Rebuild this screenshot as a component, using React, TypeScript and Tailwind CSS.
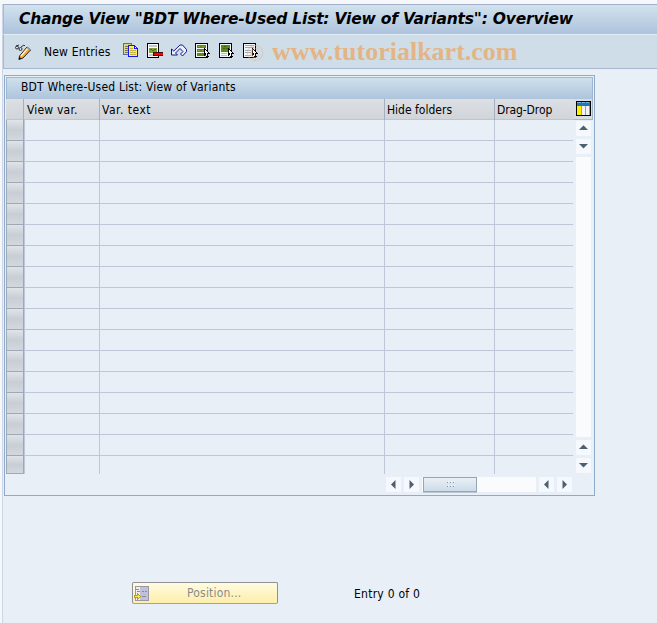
import React from 'react';

const TAHOMA = "font-['DejaVu_Sans_Condensed','DejaVu_Sans',sans-serif] [font-stretch:condensed]";

const ROWS = Array.from({ length: 17 }, (_, i) => i);

// 16x16 pixel icons of the application toolbar
const icon = 'block h-4 w-4 shrink-0';

const DisplayChangeIcon = () => (
  <svg className={icon} viewBox="0 0 16 16">
    <path d="M.5 3.500a1.500 1.500 0 1 0 3 0a1.500 1.500 0 1 0-3 0M4 5a1.500 1.500 0 1 0 3 0a1.500 1.500 0 1 0-3 0M1 2l3-1M6 3l3-2l1 1" fill="none" stroke="#222" strokeWidth=".9" />
    <path d="M4.500 12L12 3l3.500 3L8 14l-4 1.500z" fill="#f7a93a" stroke="#111" strokeWidth=".9" />
    <path d="M6 12l6.500-7.500" stroke="#fff0c8" strokeWidth="1.500" />
    <path d="M12.200 3.200l3 2.600" stroke="#8794c8" strokeWidth="1.600" />
    <path d="M3.500 15.500l1-2.500 2 1.600z" fill="#111" />
  </svg>
);

const CopyIcon = () => (
  <svg className={icon} viewBox="0 -1 16 16" shapeRendering="crispEdges">
    <path d="M0 0h9v12H0z" fill="#5b6aa8" />
    <path d="M1 1h7v10H1z" fill="#d8d888" />
    <path d="M2 3.500h3M2 5.500h3M2 7.500h3M2 9.500h3" stroke="#77774c" />
    <path d="M5 2h7v1h1v1h1v1h1v9H5z" fill="#1418e8" />
    <path d="M6 3h5v3h3v7H6z" fill="#fff05a" />
    <path d="M12 4h1v1h-1z" fill="#fff" />
    <path d="M7 5.500h3M7 7.500h6M7 9.500h6M7 11.500h6" stroke="#c4b040" />
  </svg>
);

const DeleteIcon = () => (
  <svg className={icon} viewBox="0 0 16 16" shapeRendering="crispEdges">
    <path d="M0 1h12v15H0z" fill="#000" />
    <path d="M1 2h10v13H1z" fill="#fff" />
    <path d="M2 3.500h8M2 4.500h8M2 12.500h6M2 13.500h6" stroke="#c3c8ce" />
    <path d="M2 6h8v5H2z" fill="#7fa03c" />
    <path d="M3 7.500h2M7 7.500h2M5 8.500h2" stroke="#4d7410" />
    <path d="M6 10h10v4H6z" fill="#3a0d10" />
    <path d="M7 11h9v2H7z" fill="#f00" />
  </svg>
);

const UndoIcon = () => (
  <svg className={icon} viewBox="0 -.5 16 16">
    <path d="M.5 6.500v6h6l-2-2L9 6l3 3-2.500 2.500 2 2L15.500 9.200V7L11.500 2.500H9L2.800 8.500z" fill="#eaf0f8" stroke="#15158e" strokeWidth="1" />
  </svg>
);

const SelectIcon = ({ kind }: { kind: 'all' | 'block' | 'none' }) => (
  <svg className={icon} viewBox="0 0 16 16" shapeRendering="crispEdges">
    <path d="M0 1h13v15H0z" fill="#000" />
    <path d="M1 2h11v13H1z" fill="#f4f6f8" />
    {kind === 'all' && (
      <>
        <path d="M2 3h9v3H2zM2 7h9v3H2zM2 11h9v3H2z" fill="#5d8a16" />
        <path d="M3 4.500h2M7 4.500h2M3 8.500h2M7 8.500h1" stroke="#86ad45" />
      </>
    )}
    {kind === 'block' && (
      <>
        <path d="M2 3h9v7H2z" fill="#5d8a16" />
        <path d="M5 4.500h2M4 6.500h2M7 6.500h2" stroke="#3f6508" />
        <path d="M2 11.500h6M2 13.500h6" stroke="#b4bdcc" />
      </>
    )}
    {kind === 'none' && <path d="M2 3.500h9M2 5.500h9M2 8.500h6M2 10.500h6M2 13.500h6" stroke="#9aabbd" />}
    <path d="M9 6h1v1h1v1h1v1h1v1h1v1h1v1h-2v2h1v1h-3v-2h-1v1H9z" fill="#000" />
    <path d="M10 8h1v1h1v1h1v1h-1v3h-1v-3h-1z" fill="#fff" />
  </svg>
);

const TableSettingsIcon = () => (
  <svg className="block h-[15px] w-[15px]" viewBox="0 0 15 15" shapeRendering="crispEdges">
    <path d="M0 0h15v15H0z" fill="#000" />
    <path d="M1 1h13v13H1z" fill="#f0f3f8" />
    <path d="M1 5h4v9H1z" fill="#fff000" />
    <path d="M1 1h13v4H1z" fill="#2276bd" />
    <path d="M1 1h4v1H1zM6 1h3v1H6zM10 1h3v1h-3z" fill="#79b5de" />
    <path d="M5.500 5v9M9.500 5v9M13.500 5v9" stroke="#9a9eab" />
  </svg>
);

const PositionIcon = () => (
  <svg className="block h-[15px] w-[15px]" viewBox="0 0 15 15" shapeRendering="crispEdges">
    <path d="M1 0h14v15H1z" fill="#9898a8" />
    <path d="M2 1h12v13H2z" fill="#c0c0d8" />
    <path d="M2 1h4v13H2z" fill="#eeeef2" />
    <path d="M2 3.500h3M3 5.500h3M8 5.500h2M11 5.500h2M8 10.500h4" stroke="#8c8c98" />
    <path d="M0 9h3V7h1v1h1v1h1v1h1v1H6v1H5v1H4v1H3v-2H0z" fill="#b59f28" />
    <path d="M1 10h3V9h1v1h1v1H5v1H4v-1H1z" fill="#ffe94a" />
  </svg>
);

const arrows = {
  up: 'M3 9L7.500 4.500L12 9z',
  down: 'M3 5h9L7.500 9.500z',
  left: 'M9.500 3v9L5 7.500z',
  right: 'M5.500 3v9L10 7.500z',
};

const ScrollButton = ({ dir }: { dir: keyof typeof arrows }) => (
  <button className="block h-[15px] w-[15px] shrink-0 bg-[#f5f8fc]">
    <svg className="block h-[15px] w-[15px]" viewBox="0 0 15 15">
      <path d={arrows[dir]} fill="#4c606e" />
    </svg>
  </button>
);

const TitleBar = () => (
  <div className="h-[31px] border-t border-b border-l border-t-[#9fb0c8] border-b-[#e4eef8] border-l-[#a9b8cf] bg-linear-to-b from-[#d2e2ee] to-[#adc3dc] pl-[15px]">
    <h1 className="font-['DejaVu_Sans',sans-serif] text-[15.5px] leading-[28px] font-bold tracking-[-0.2px] whitespace-nowrap text-black italic [font-stretch:normal]">
      Change View "BDT Where-Used List: View of Variants": Overview
    </h1>
  </div>
);

const Toolbar = () => (
  <div className="flex h-[34px] items-center border-b border-l border-[#a9b8cf] bg-[#cfdde8] pl-[11px]">
    <DisplayChangeIcon />
    <span className="ml-[13px] w-[79px] text-[12px] tracking-[0.18px] whitespace-nowrap">New Entries</span>
    <div className="flex gap-2 pb-[3px]">
      <CopyIcon />
      <DeleteIcon />
      <UndoIcon />
      <SelectIcon kind="all" />
      <SelectIcon kind="block" />
      <SelectIcon kind="none" />
    </div>
    <div className="relative ml-[13px] font-['Liberation_Serif',serif] text-[26px] font-bold whitespace-nowrap text-[#e3b586]">
      <span className="absolute top-[3px] -left-[26px] text-[24px] font-normal opacity-55">©</span>
      www.tutorialkart.com
    </div>
  </div>
);

const VerticalScrollbar = () => (
  <div className="flex flex-col items-center">
    <div className="flex h-[21px] w-[19px] items-center justify-center border-r border-b border-[#aab4c2] bg-[#d8dde3] pb-px">
      <TableSettingsIcon />
    </div>
    <div className="flex grow flex-col gap-[3px] pt-px pb-px">
      <ScrollButton dir="up" />
      <ScrollButton dir="down" />
      <div className="w-[15px] grow bg-[#fafbfc]" />
      <ScrollButton dir="up" />
      <ScrollButton dir="down" />
    </div>
  </div>
);

const HorizontalScrollbar = () => (
  <div className="mt-[3px] ml-[380px] flex gap-[3px]">
    <ScrollButton dir="left" />
    <ScrollButton dir="right" />
    <div className="h-[15px] w-[114px] bg-[#fafbfc] pl-px">
      <div className="flex h-[15px] w-[54px] items-center justify-center border border-[#94a6b7] bg-linear-to-b from-[#e9f0f6] to-[#cddbe8] shadow-[0_1px_0_#b9c6d3]">
        <div className="grid grid-cols-3 gap-x-[2px] gap-y-[3px]">
          {[0, 1, 2, 3, 4, 5].map((dot) => (
            <i key={dot} className="h-px w-px bg-[#8497aa] shadow-[1px_-1px_0_#fff]" />
          ))}
        </div>
      </div>
    </div>
    <ScrollButton dir="left" />
    <ScrollButton dir="right" />
  </div>
);

const VariantTable = () => (
  <div className="h-[421px] w-[591px] border border-[#8eabc9] p-px">
    <div className="h-[22px] border border-b-0 border-[#9fb7d1] bg-linear-to-b from-[#cfe0ed] to-[#adc4dc] pl-[14px] text-[12px] leading-[19px] tracking-[0.19px]">
      BDT Where-Used List: View of Variants
    </div>
    <div className="flex">
      <div className="w-[568px]">
        <div className="grid h-[21px] grid-cols-[18px_76px_285px_110px_79px] border-b border-[#bfc5ce] bg-linear-to-b from-[#dce0e4] to-[#d1d5da] text-[12px] leading-[22px] whitespace-nowrap">
          <div className="border-r border-[#a5afbd]" />
          <div className="border-r border-[#a5afbd] pl-[3px] tracking-[0.2px]">View var.</div>
          <div className="border-r border-[#a5afbd] pl-[2px] tracking-[0.5px]">Var. text</div>
          <div className="border-r border-[#a5afbd] pl-[2px]">Hide folders</div>
          <div className="pl-[2px] tracking-[-0.1px]">Drag-Drop</div>
        </div>
        {ROWS.map((row) => (
          <div key={row} className="group grid h-[21px] grid-cols-[18px_76px_285px_110px_78px] last:h-[18px]">
            <div className="border border-t-0 border-[#9da9b8] bg-linear-to-b from-[#e0e4e8] via-[#c8ced6] to-[#d3d8dd]" />
            <div className="border-r border-b border-l border-[#bdc7d8] group-last:border-b-0" />
            <div className="border-r border-b border-[#bdc7d8] group-last:border-b-0" />
            <div className="border-r border-b border-[#bdc7d8] group-last:border-b-0" />
            <div className="border-b border-[#bdc7d8] group-last:border-b-0" />
          </div>
        ))}
      </div>
      <VerticalScrollbar />
    </div>
    <HorizontalScrollbar />
  </div>
);

const Footer = () => (
  <div className="mt-[86px] ml-[129px] flex items-center text-[12px]">
    <button className="flex h-[22px] w-[146px] items-center rounded-[2px] border border-[#8f8f96] border-b-[#b0a27a] bg-linear-to-b from-[#fffbe0] to-[#fdeeaa] pl-px text-[#8b8b8b]">
      <PositionIcon />
      <span className="pl-[38px] tracking-[0.2px]">Position...</span>
    </button>
    <span className="ml-[76px] pt-px tracking-[0.25px]">Entry 0 of 0</span>
  </div>
);

export default function App() {
  return (
    <div className={`h-[623px] w-[657px] overflow-hidden bg-[#f5f7fb] pt-1 pl-[2px] text-black ${TAHOMA}`}>
      <div className="h-full border-l border-[#cdd6e6] bg-[#e8eff6]">
        <TitleBar />
        <Toolbar />
        <div className="pt-[6px] pl-px">
          <VariantTable />
        </div>
        <Footer />
      </div>
    </div>
  );
}
